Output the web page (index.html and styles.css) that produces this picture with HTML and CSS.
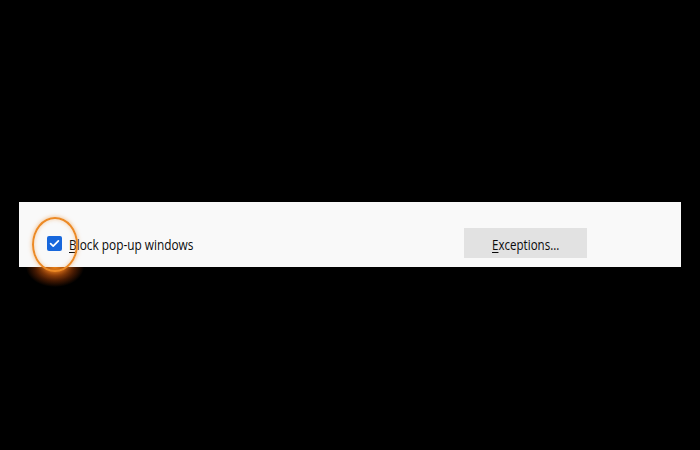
FILE: index.html
```html
<!DOCTYPE html>
<html>
<head>
<meta charset="utf-8">
<link rel="stylesheet" href="styles.css">
</head>
<body>
<div class="stage">
  <div class="panel">
    <label class="check">
      <span class="box">
        <svg width="15" height="15" viewBox="0 0 15 15"><path d="M3.6 7.7 L6.2 10.2 L11.4 4.8" fill="none" stroke="#fff" stroke-width="1.7" stroke-linecap="round" stroke-linejoin="round"/></svg>
      </span>
      <span class="label"><u>B</u>lock pop-up windows</span>
    </label>
    <button class="btn"><span class="btn-text"><u>E</u>xceptions...</span></button>
  </div>
  <div class="glow"></div>
  <div class="ring"></div>
</div>
</body>
</html>
```
FILE: styles.css
```css
html, body {
  margin: 0;
  padding: 0;
  background: #000;
  width: 700px;
  height: 450px;
  overflow: hidden;
  font-family: "Open Sans", "Noto Sans", sans-serif;
}
.stage {
  position: relative;
  width: 700px;
  height: 450px;
  padding-top: 202px;
  box-sizing: border-box;
}
.panel {
  margin-left: 19px;
  width: 662px;
  height: 65px;
  box-sizing: border-box;
  background: #f9f9f9;
  padding: 26px 0 9px 28px;
  display: flex;
  align-items: center;
}
.check {
  display: flex;
  align-items: center;
  width: 417px;
}
.box {
  width: 15px;
  height: 15px;
  background: #1767dc;
  border-radius: 2px;
  display: flex;
  flex: none;
}
.label {
  display: inline-block;
  margin-left: 7px;
  font-size: 15px;
  color: #0a0a0a;
  white-space: nowrap;
  transform: scaleX(0.79);
  transform-origin: 0 50%;
  position: relative;
  top: 1px;
}
.label u, .btn u {
  text-decoration-thickness: 1px;
  text-underline-offset: 2px;
}
.btn {
  width: 123px;
  height: 30px;
  border: none;
  background: #e2e2e2;
  font-family: inherit;
  color: #0a0a0a;
  padding: 0;
  display: flex;
  align-items: center;
  justify-content: center;
}
.btn-text {
  display: inline-block;
  font-size: 15px;
  white-space: nowrap;
  transform: scaleX(0.77);
  transform-origin: 50% 50%;
  position: relative;
  top: 1px;
}
.ring {
  position: absolute;
  left: 32px;
  top: 217px;
  width: 42px;
  height: 51px;
  border: 2px solid #ec8a26;
  border-radius: 50%;
  box-shadow: 0 0 4px rgba(240, 140, 40, 0.6), inset 0 0 4px rgba(240, 140, 40, 0.4);
}
.glow {
  position: absolute;
  left: 26px;
  top: 267px;
  width: 58px;
  height: 20px;
  border-radius: 0 0 50% 50%;
  background: radial-gradient(ellipse 50% 100% at 50% 0%, rgba(245,135,25,0.95) 0%, rgba(210,95,15,0.75) 35%, rgba(150,55,5,0.45) 70%, rgba(0,0,0,0) 100%);
}
```
